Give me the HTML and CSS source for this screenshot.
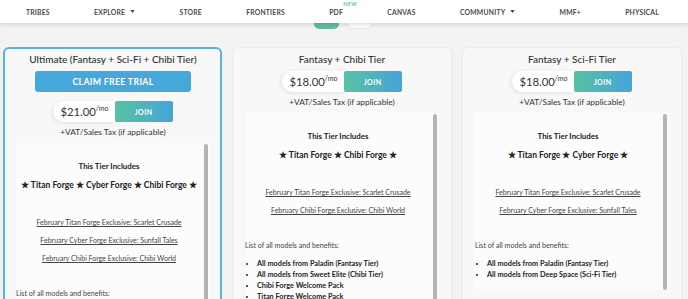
FILE: index.html
```html
<!DOCTYPE html>
<html lang="en">
<head>
    <meta charset="UTF-8">
    <meta name="viewport" content="width=device-width, initial-scale=1.0">
    <title>Membership Tiers</title>
    <link rel="stylesheet" href="styles.css">
</head>
<body>
    <nav class="topnav">
        <a href="#">TRIBES</a>
        <a href="#">EXPLORE <svg class="caret" width="6" height="4" viewBox="0 0 6 4"><path d="M0 0h6L3 4z"/></svg></a>
        <a href="#">STORE</a>
        <a href="#">FRONTIERS</a>
        <a href="#" class="has-badge">PDF<span class="badge">NEW</span></a>
        <a href="#">CANVAS</a>
        <a href="#">COMMUNITY <svg class="caret" width="6" height="4" viewBox="0 0 6 4"><path d="M0 0h6L3 4z"/></svg></a>
        <a href="#">MMF+</a>
        <a href="#">PHYSICAL</a>
    </nav>

    <div class="switch">
        <span class="switch-on"></span>
        <span class="switch-off"></span>
    </div>

    <main class="tiers">
        <section class="tier tier-featured">
            <h2 class="tier-name">Ultimate (Fantasy + Sci-Fi + Chibi Tier)</h2>
            <button class="claim">CLAIM FREE TRIAL</button>
            <div class="price">
                <span class="amount">$21.00<sup>/mo</sup></span>
                <button class="join">JOIN</button>
            </div>
            <p class="tax">+VAT/Sales Tax (if applicable)</p>
            <div class="perks">
                <div class="perks-body">
                    <h3>This Tier Includes</h3>
                    <p class="forges">★ Titan Forge ★ Cyber Forge ★ Chibi Forge ★</p>
                    <p class="drop first"><a href="#">February Titan Forge Exclusive: Scarlet Crusade</a></p>
                    <p class="drop"><a href="#">February Cyber Forge Exclusive: Sunfall Tales</a></p>
                    <p class="drop"><a href="#">February Chibi Forge Exclusive: Chibi World</a></p>
                    <p class="list-title">List of all models and benefits:</p>
                    <ul class="benefits">
                        <li>All models from Paladin (Fantasy Tier)</li>
                        <li>All models from Deep Space (Sci-Fi Tier)</li>
                        <li>All models from Sweet Elite (Chibi Tier)</li>
                        <li>Titan Forge Welcome Pack</li>
                    </ul>
                </div>
                <div class="scrollbar"></div>
            </div>
        </section>

        <section class="tier">
            <h2 class="tier-name">Fantasy + Chibi Tier</h2>
            <div class="price">
                <span class="amount">$18.00<sup>/mo</sup></span>
                <button class="join">JOIN</button>
            </div>
            <p class="tax">+VAT/Sales Tax (if applicable)</p>
            <div class="perks">
                <div class="perks-body">
                    <h3>This Tier Includes</h3>
                    <p class="forges">★ Titan Forge ★ Chibi Forge ★</p>
                    <p class="drop first"><a href="#">February Titan Forge Exclusive: Scarlet Crusade</a></p>
                    <p class="drop"><a href="#">February Chibi Forge Exclusive: Chibi World</a></p>
                    <p class="list-title">List of all models and benefits:</p>
                    <ul class="benefits">
                        <li>All models from Paladin (Fantasy Tier)</li>
                        <li>All models from Sweet Elite (Chibi Tier)</li>
                        <li>Chibi Forge Welcome Pack</li>
                        <li>Titan Forge Welcome Pack</li>
                    </ul>
                </div>
                <div class="scrollbar"></div>
            </div>
        </section>

        <section class="tier">
            <h2 class="tier-name">Fantasy + Sci-Fi Tier</h2>
            <div class="price">
                <span class="amount">$18.00<sup>/mo</sup></span>
                <button class="join">JOIN</button>
            </div>
            <p class="tax">+VAT/Sales Tax (if applicable)</p>
            <div class="perks">
                <div class="perks-body">
                    <h3>This Tier Includes</h3>
                    <p class="forges">★ Titan Forge ★ Cyber Forge ★</p>
                    <p class="drop first"><a href="#">February Titan Forge Exclusive: Scarlet Crusade</a></p>
                    <p class="drop"><a href="#">February Cyber Forge Exclusive: Sunfall Tales</a></p>
                    <p class="list-title">List of all models and benefits:</p>
                    <ul class="benefits">
                        <li>All models from Paladin (Fantasy Tier)</li>
                        <li>All models from Deep Space (Sci-Fi Tier)</li>
                    </ul>
                </div>
                <div class="scrollbar short"></div>
            </div>
        </section>
    </main>
</body>
</html>
```

FILE: styles.css
```css
body {
    margin: 0;
    background: #f3f3f3;
    font-family: Lato, "Noto Sans", sans-serif;
    color: #333;
    overflow: hidden;
}

/* top navigation */
.topnav {
    position: relative;
    z-index: 1;
    height: 23px;
    display: flex;
    align-items: center;
    justify-content: space-between;
    padding: 0 29px 0 26px;
    background: #fff;
    box-shadow: 0 2px 4px rgba(0, 0, 0, 0.12);
}
.topnav a {
    position: relative;
    display: flex;
    align-items: center;
    gap: 5px;
    font-size: 6.8px;
    font-weight: 700;
    letter-spacing: 0.2px;
    color: #4a4a4a;
    text-decoration: none;
}
.caret {
    fill: #4a4a4a;
    width: 5px;
    height: 3px;
}
.badge {
    position: absolute;
    left: 14px;
    top: -7px;
    font-size: 5.5px;
    font-weight: 700;
    color: #62c6a8;
}

/* monthly / yearly switch peeking under the nav */
.switch {
    display: flex;
    justify-content: center;
    gap: 8px;
    padding-right: 3px;
}
.switch span {
    width: 25px;
    height: 6px;
    border-radius: 0 0 5px 5px;
}
.switch-on {
    background: #5fbf9c;
}
.switch-off {
    background: #fff;
    border: 1px solid #e6e6e6;
    border-top: 0;
    box-sizing: border-box;
}

/* tier cards */
.tiers {
    display: flex;
    gap: 10px;
    padding: 0 6px 0 3px;
    margin-top: 18px;
}
.tier {
    flex: 1;
    min-width: 0;
    height: 300px;
    padding: 3px 12px 0 12px;
    background: #f8f8f8;
    border: 1px solid #ececec;
    border-radius: 6px;
    box-shadow: 0 1px 3px rgba(0, 0, 0, 0.04);
    text-align: center;
}
.tier-featured {
    border: 2px solid #5bb2e2;
    padding: 2px 10px 0 11px;
}
.tier-name {
    margin: 0 0 4px;
    font-size: 10px;
    line-height: 16px;
    font-weight: 500;
    color: #333;
}
.claim {
    display: block;
    width: 156px;
    height: 21px;
    margin: 0 auto 9px;
    padding: 0;
    border: 0;
    border-radius: 3px;
    background: #46a7da;
    color: #fff;
    font-family: inherit;
    font-size: 8.8px;
    font-weight: 700;
    letter-spacing: 0.3px;
}
.price {
    display: flex;
    justify-content: center;
    height: 21px;
}
.amount {
    display: flex;
    align-items: center;
    padding: 0 6px 0 7px;
    background: #fff;
    border-radius: 11px 0 0 11px;
    box-shadow: -1px 1px 4px rgba(0, 0, 0, 0.1);
    font-size: 11.3px;
    color: #333;
}
.amount sup {
    font-size: 7px;
    align-self: flex-start;
    margin-top: 3px;
}
.join {
    width: 58px;
    border: 0;
    border-radius: 2px;
    background: linear-gradient(90deg, #56c2a2, #47a4d8);
    color: #fff;
    font-family: inherit;
    font-size: 7px;
    font-weight: 700;
    letter-spacing: 0.4px;
}
.tax {
    margin: 4px 0 0;
    font-size: 8.3px;
    line-height: 12px;
    color: #333;
}

/* scrolling perks box */
.perks {
    display: flex;
    margin-top: 5px;
    background: #fcfcfc;
}
.perks-body {
    flex: 1;
    min-width: 0;
}
.scrollbar {
    width: 4px;
    height: 200px;
    margin: 1px 2px 0 2px;
    border-radius: 2px;
    background: #b4b4b4;
}
.scrollbar.short {
    height: 176px;
}
.perks h3 {
    margin: 17px 0 0;
    font-size: 7.9px;
    line-height: 12px;
    font-weight: 700;
    color: #222;
}
.forges {
    margin: 7px 0 0;
    font-size: 8.5px;
    line-height: 12px;
    font-weight: 700;
    color: #222;
}
.drop {
    margin: 6px 0 0;
    font-size: 7px;
    line-height: 12px;
}
.drop.first {
    margin-top: 25px;
}
.drop a {
    color: #444;
}
.list-title {
    margin: 24px 0 0;
    text-align: left;
    font-size: 7.1px;
    line-height: 12px;
    color: #444;
}
.benefits {
    margin: 6px 0 0;
    padding-left: 12px;
    text-align: left;
    font-size: 7.3px;
    line-height: 11px;
    font-weight: 700;
    color: #222;
}
```
